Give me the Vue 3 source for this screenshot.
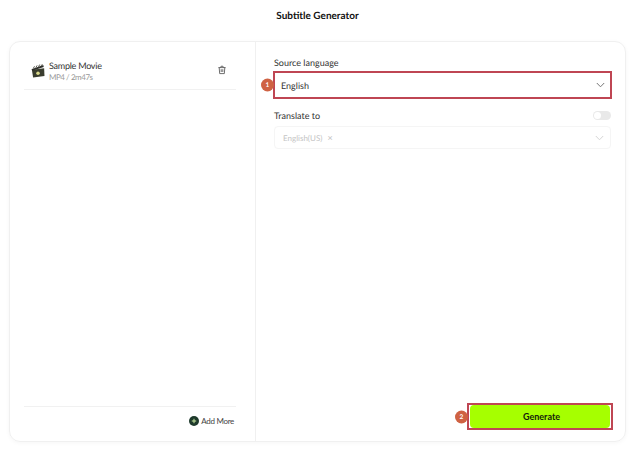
<script setup>
const title = 'Subtitle Generator'
</script>

<template>
  <div class="page">
    <h1 class="title">{{ title }}</h1>
    <div class="card">
      <aside class="left">
        <div class="file">
          <svg class="clap" width="14" height="16" viewBox="0 0 16 16">
            <path d="M1 6.5 15 4.8 15.4 13.6 2.4 15.5Z" fill="#3a3d2e"/>
            <path d="M0.6 6 14 1.2 14.6 3.4 1.4 7.8Z" fill="#2f2f2a"/>
            <path d="M2.5 5.3 4 2.6M5.5 4.2 7 1.6M8.5 3.2 10 .6M11.5 2.2 13 .2" stroke="#5a5a50" stroke-width="1.1"/>
            <circle cx="8" cy="10.5" r="2" fill="#d9d98a"/>
          </svg>
          <div class="meta">
            <div class="name">Sample Movie</div>
            <div class="sub">MP4 / 2m47s</div>
          </div>
          <svg class="trash" width="8" height="10" viewBox="0 0 10 11" fill="none" stroke="#4a4a4a" stroke-width="1">
            <path d="M.5 2.5h9M3.2 2.3 3.8.8h2.4l.6 1.5M1.5 2.5l.6 7.5h5.8l.6-7.5M4 4.5v3.5M6 4.5v3.5"/>
          </svg>
        </div>
        <div class="spacer"></div>
        <div class="foot">
          <button class="add">
            <svg width="10" height="10" viewBox="0 0 10 10">
              <circle cx="5" cy="5" r="5" fill="#1e3a2c"/>
              <path d="M5 2.8v4.4M2.8 5h4.4" stroke="#c9e8a0" stroke-width="1"/>
            </svg>
            <span>Add More</span>
          </button>
        </div>
      </aside>
      <main class="right">
        <label class="label">Source language</label>
        <div class="marked source">
          <span class="badge">1</span>
          <span class="value">English</span>
          <svg class="chev" width="9" height="6" viewBox="0 0 9 6" fill="none" stroke="#777" stroke-width="1"><path d="M.8 1 4.5 4.8 8.2 1"/></svg>
        </div>
        <div class="row">
          <label class="label">Translate to</label>
          <span class="toggle"><i></i></span>
        </div>
        <div class="multi">
          <span class="tag">English(US)</span>
          <span class="x">×</span>
          <svg class="chev" width="9" height="6" viewBox="0 0 9 6" fill="none" stroke="#d5d5d5" stroke-width="1"><path d="M.8 1 4.5 4.8 8.2 1"/></svg>
        </div>
        <div class="spacer"></div>
        <div class="action">
          <div class="marked gen">
            <span class="badge">2</span>
            <button class="generate">Generate</button>
          </div>
        </div>
      </main>
    </div>
  </div>
</template>

<style>
html, body { margin: 0; background: #fff; }
</style>

<style scoped>
.page {
  width: 633px;
  height: 450px;
  box-sizing: border-box;
  padding: 0 7px 8px 9px;
  display: flex;
  flex-direction: column;
  font-family: "Lato", "Noto Sans", sans-serif;
  text-rendering: geometricPrecision;
  overflow: hidden;
}
.title {
  margin: 0;
  height: 41px;
  padding-top: 9px;
  box-sizing: border-box;
  text-align: center;
  font-size: 10px;
  line-height: 14px;
  font-weight: 700;
  color: #111;
}
.card {
  flex: 1;
  display: flex;
  border: 1px solid #f0f0f0;
  border-radius: 11px;
  box-shadow: 0 1px 4px rgba(0,0,0,.04);
  min-height: 0;
}
.left {
  width: 246px;
  box-sizing: border-box;
  padding: 14px 19px 0 14px;
  border-right: 1px solid #f0f0f0;
  display: flex;
  flex-direction: column;
}
.file {
  height: 30px;
  border-bottom: 1px solid #f1f1f1;
  display: flex;
  align-items: flex-start;
  padding: 3px 0 0 7px;
}
.clap { margin: 4px 4px 0 0; flex: none; }
.meta { flex: 1; }
.name { font-size: 9px; line-height: 13px; letter-spacing: -.25px; color: #333; }
.sub { font-size: 8px; line-height: 11px; letter-spacing: -.45px; color: #999; }
.trash { margin: 6px 10px 0 0; }
.spacer { flex: 1; }
.foot {
  height: 34px;
  border-top: 1px solid #f1f1f1;
  display: flex;
  justify-content: flex-end;
  align-items: flex-start;
}
.add {
  display: flex;
  align-items: center;
  gap: 2px;
  background: none;
  border: 0;
  padding: 9px 2px 0 0;
  font: inherit;
  font-size: 8px;
  letter-spacing: -.3px;
  color: #444;
}
.right {
  flex: 1;
  min-width: 0;
  box-sizing: border-box;
  padding: 14px 14px 11px 18px;
  display: flex;
  flex-direction: column;
}
.label { font-size: 9px; line-height: 13px; color: #333; display: block; }
.marked { position: relative; box-sizing: border-box; border: 2px solid #bf4653; }
.source {
  margin: 2px -1px 0 -1px;
  height: 28px;
  display: flex;
  align-items: center;
  justify-content: space-between;
  padding: 0 5px 0 6px;
}
.value { font-size: 9px; color: #333; }
.badge {
  position: absolute;
  left: -14px;
  top: 50%;
  transform: translateY(-50%);
  width: 13px;
  height: 13px;
  border-radius: 50%;
  background: #cf6243;
  color: #fff;
  font-size: 6.5px;
  font-weight: 700;
  display: flex;
  align-items: center;
  justify-content: center;
}
.row {
  display: flex;
  justify-content: space-between;
  align-items: center;
  margin-top: 10px;
}
.toggle {
  width: 18px;
  height: 9px;
  border-radius: 5px;
  background: #e9e9e9;
  position: relative;
  display: block;
}
.toggle i {
  position: absolute;
  left: 1px;
  top: 1px;
  width: 7px;
  height: 7px;
  border-radius: 50%;
  background: #fff;
}
.multi {
  margin-top: 4px;
  height: 23px;
  box-sizing: border-box;
  border: 1px solid #f5f5f5;
  border-radius: 4px;
  display: flex;
  align-items: center;
  padding: 0 6px 0 8px;
  font-size: 8px;
  color: #c4c4c4;
}
.x { margin-left: 5px; font-size: 9px; }
.multi .chev { margin-left: auto; }
.action { display: flex; justify-content: flex-end; }
.gen {
  width: 146px;
  height: 27px;
  margin-right: -2px;
  padding: 0 1px;
}
.gen .badge { left: -14px; }
.generate {
  width: 100%;
  height: 100%;
  display: block;
  border: 0;
  border-radius: 4px;
  background: #a6ff00;
  color: #14210c;
  font: inherit;
  font-size: 9px;
  font-weight: 700;
  padding: 0 0 0 3px;
}
</style>
